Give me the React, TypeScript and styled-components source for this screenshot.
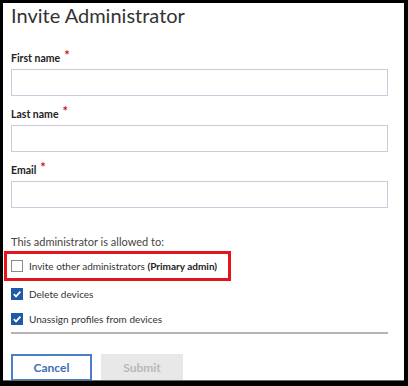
import React from "react";
import styled, { createGlobalStyle } from "styled-components";

const Global = createGlobalStyle`
  html, body { margin: 0; padding: 0; background: #000; }
  body { font-family: Lato, "Open Sans", sans-serif; }
  * { box-sizing: border-box; }
`;

const Frame = styled.div`
  width: 408px;
  height: 386px;
  background: #000;
  padding: 3px 4px 5px 3px;
`;

const Panel = styled.div`
  height: 100%;
  background: #fff;
  overflow: hidden;
  padding: 0 16px 0 8px;
  display: flex;
  flex-direction: column;
  border-bottom: 1px solid #6a6a6a;
`;

const Title = styled.h1`
  margin: 0;
  font-size: 20px;
  line-height: 24px;
  font-weight: 400;
  color: #333;
`;

const Fields = styled.div`
  display: flex;
  flex-direction: column;
  gap: 10px;
  margin-top: 23px;
`;

const Field = styled.div`
  display: flex;
  flex-direction: column;
  gap: 4px;
`;

const Label = styled.label`
  font-size: 10.5px;
  line-height: 14px;
  font-weight: 700;
  color: #222;
`;

const Req = styled.span`
  color: #d0101c;
  font-size: 13px;
  font-weight: 700;
  margin-left: 4px;
  position: relative;
  top: -2px;
`;

const Input = styled.input`
  height: 27px;
  width: 100%;
  border: 1px solid #cfcbdc;
  background: #fff;
  outline: none;
`;

const Allowed = styled.div`
  margin-top: 27px;
  font-size: 11px;
  line-height: 14px;
  color: #444;
`;

const Options = styled.div`
  display: flex;
  flex-direction: column;
  margin-top: 2px;
`;

const Option = styled.div<{ $highlight?: boolean }>`
  display: flex;
  align-items: center;
  gap: 6px;
  height: ${(p) => (p.$highlight ? "30px" : "25px")};
  font-size: 10px;
  color: #333;
  white-space: nowrap;
  ${(p) =>
    p.$highlight
      ? `
    border: 3px solid #e3141e;
    margin-left: -7px;
    padding-left: 4px;
    width: 227px;
  `
      : ""}
`;

const Box = styled.span<{ $checked?: boolean }>`
  width: 12px;
  height: 12px;
  flex: none;
  display: inline-flex;
  align-items: center;
  justify-content: center;
  border: 1px solid ${(p) => (p.$checked ? "#1f5aa6" : "#8a8a8a")};
  background: ${(p) => (p.$checked ? "#1f5aa6" : "#fff")};
`;

const Strong = styled.b`
  font-weight: 700;
  color: #222;
`;

const Divider = styled.hr`
  margin: 1px 0 0;
  width: 377px;
  border: none;
  border-top: 2px solid #b4b4b4;
`;

const Actions = styled.div`
  display: flex;
  gap: 9px;
  margin-top: 20px;
`;

const Button = styled.button<{ $primary?: boolean }>`
  height: 27px;
  width: ${(p) => (p.$primary ? "82px" : "81px")};
  font-family: Lato, "Open Sans", sans-serif;
  font-size: 12px;
  font-weight: 700;
  border: ${(p) => (p.$primary ? "1px solid #e8e8e8" : "2px solid #4a7fc6")};
  background: ${(p) => (p.$primary ? "#e8e8e8" : "#fff")};
  color: ${(p) => (p.$primary ? "#b8b8b8" : "#3c6fb4")};
  padding: 0;
`;

const Check = () => (
  <svg width="10" height="10" viewBox="0 0 10 10">
    <polyline points="1.8,5.2 4,7.4 8.4,2.6" fill="none" stroke="#fff" strokeWidth="1.7" />
  </svg>
);

export default function App() {
  return (
    <>
      <Global />
      <Frame>
        <Panel>
          <Title>Invite Administrator</Title>
          <Fields>
            <Field>
              <Label>
                First name<Req>*</Req>
              </Label>
              <Input />
            </Field>
            <Field>
              <Label>
                Last name<Req>*</Req>
              </Label>
              <Input />
            </Field>
            <Field>
              <Label>
                Email<Req>*</Req>
              </Label>
              <Input />
            </Field>
          </Fields>
          <Allowed>This administrator is allowed to:</Allowed>
          <Options>
            <Option $highlight>
              <Box />
              <span>
                Invite other administrators <Strong>(Primary admin)</Strong>
              </span>
            </Option>
            <Option>
              <Box $checked>
                <Check />
              </Box>
              <span>Delete devices</span>
            </Option>
            <Option>
              <Box $checked>
                <Check />
              </Box>
              <span>Unassign profiles from devices</span>
            </Option>
          </Options>
          <Divider />
          <Actions>
            <Button>Cancel</Button>
            <Button $primary disabled>
              Submit
            </Button>
          </Actions>
        </Panel>
      </Frame>
    </>
  );
}
